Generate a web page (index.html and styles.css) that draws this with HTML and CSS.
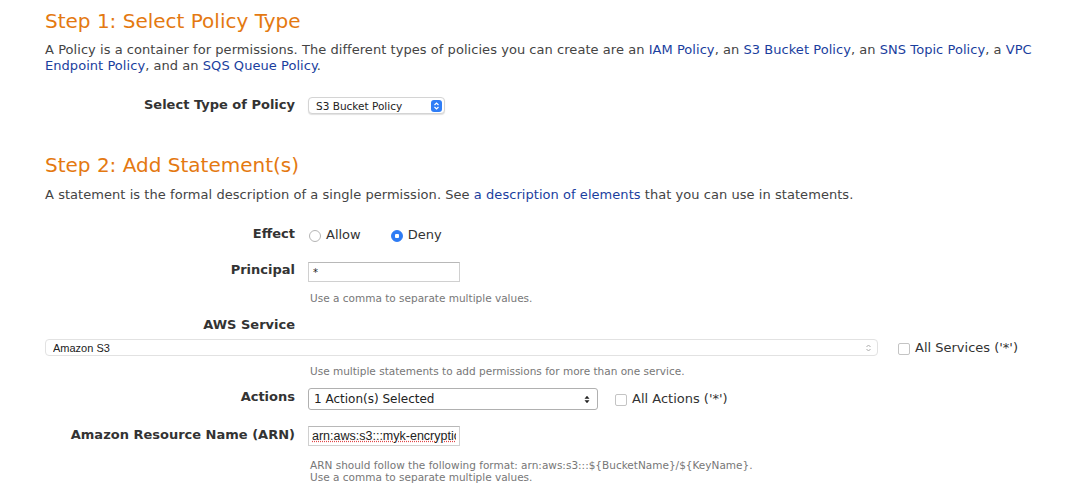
FILE: index.html
```html
<!DOCTYPE html>
<html>
<head>
<meta charset="utf-8">
<link rel="stylesheet" href="styles.css">
</head>
<body>
<div class="page">
  <h1 class="step step-1">Step 1: Select Policy Type</h1>
  <p class="intro">A Policy is a container for permissions. The different types of policies you can create are an <a href="#">IAM Policy</a>, an <a href="#">S3 Bucket Policy</a>, an <a href="#">SNS Topic Policy</a>, a <a href="#">VPC</a> <a href="#">Endpoint Policy</a>, and an <a href="#">SQS Queue Policy</a>.</p>

  <div class="row type-row">
    <label class="label">Select Type of Policy</label>
    <div class="control">
      <select class="sel sel-type"><option>S3 Bucket Policy</option></select>
    </div>
  </div>

  <h1 class="step step-2">Step 2: Add Statement(s)</h1>
  <p class="intro intro-2">A statement is the formal description of a single permission. See <a href="#">a description of elements</a> that you can use in statements.</p>

  <div class="row effect-row">
    <label class="label">Effect</label>
    <div class="control radios">
      <span class="radio-opt"><span class="radio"></span>Allow</span>
      <span class="radio-opt"><span class="radio checked"></span>Deny</span>
    </div>
  </div>

  <div class="row principal-row">
    <label class="label">Principal</label>
    <div class="control">
      <input class="text-in principal-in" type="text" value="*">
      <div class="hint">Use a comma to separate multiple values.</div>
    </div>
  </div>

  <div class="row service-label-row">
    <label class="label">AWS Service</label>
  </div>
  <div class="service-line">
    <select class="sel sel-service"><option>Amazon S3</option></select>
    <span class="check-opt"><span class="check"></span>All Services ('*')</span>
  </div>
  <div class="row hint-row">
    <span class="label"></span>
    <div class="control"><div class="hint">Use multiple statements to add permissions for more than one service.</div></div>
  </div>

  <div class="row actions-row">
    <label class="label">Actions</label>
    <div class="control inline">
      <select class="sel sel-actions"><option>1 Action(s) Selected</option></select>
      <span class="check-opt"><span class="check"></span>All Actions ('*')</span>
    </div>
  </div>

  <div class="row arn-row">
    <label class="label">Amazon Resource Name (ARN)</label>
    <div class="control">
      <input class="text-in arn-in" type="text" value="arn:aws:s3:::myk-encryption-bucket/*">
      <div class="hint arn-hint">ARN should follow the following format: arn:aws:s3:::${BucketName}/${KeyName}.<br>Use a comma to separate multiple values.</div>
    </div>
  </div>
</div>
</body>
</html>
```

FILE: styles.css
```css
html, body {
  margin: 0;
  padding: 0;
  background: #fff;
}

.page {
  width: 998px;
  padding: 9px 0 0 45px;
  font-family: "DejaVu Sans", Verdana, sans-serif;
  color: #444;
  font-size: 13px;
}

a {
  color: #1a3e9e;
  text-decoration: none;
}

.step {
  margin: 0;
  font-size: 20px;
  line-height: 24px;
  font-weight: normal;
  color: #e47911;
}

.intro {
  margin: 9px 0 0 0;
  line-height: 16px;
  letter-spacing: 0.05px;
}

.step-2 {
  margin-top: 39px;
}

.intro-2 {
  margin-top: 10px;
}

.row {
  display: flex;
  align-items: flex-start;
}

.label {
  flex: 0 0 250px;
  text-align: right;
  font-weight: bold;
  color: #333;
  font-size: 13px;
  line-height: 18px;
}

.control {
  margin-left: 13px;
  display: flex;
  flex-direction: column;
  align-items: flex-start;
}

.control.inline {
  flex-direction: row;
  align-items: center;
}

.type-row {
  margin-top: 22px;
}

.sel {
  -webkit-appearance: none;
  appearance: none;
  margin: 0;
  background-repeat: no-repeat;
  outline: none;
}

.sel-type {
  width: 137px;
  height: 17px;
  margin-top: 1px;
  border: 1px solid #d4d4d4;
  border-radius: 4px;
  box-shadow: 0 1px 1px rgba(0,0,0,0.12);
  background-color: #fff;
  font-family: "DejaVu Sans", Verdana, sans-serif;
  font-size: 10.5px;
  color: #222;
  padding: 0 0 0 7px;
  background-image: url("data:image/svg+xml;utf8,<svg xmlns='http://www.w3.org/2000/svg' width='11' height='12'><rect width='11' height='12' rx='3' fill='%232f7df6'/><path d='M3.5 5 L5.5 3 L7.5 5 M3.5 7 L5.5 9 L7.5 7' fill='none' stroke='white' stroke-width='1.2'/></svg>");
  background-position: right 2px center;
}

.effect-row {
  margin-top: 22px;
}

.radios {
  flex-direction: row;
  align-items: center;
  margin-left: 14px;
  padding-top: 2px;
}

.radio-opt {
  display: inline-flex;
  align-items: center;
  color: #333;
  font-size: 13px;
  line-height: 16px;
  margin-right: 30px;
}

.radio {
  width: 10px;
  height: 10px;
  border: 1px solid #b5b5b5;
  border-radius: 50%;
  background: #fff;
  margin-right: 5px;
  margin-top: 2px;
  box-sizing: content-box;
  display: inline-block;
}

.radio.checked {
  border-color: #2d7bf4;
  background: radial-gradient(circle, #fff 0 2px, #2d7bf4 2.5px);
}

.principal-row {
  margin-top: 18px;
}

.text-in {
  margin: 0;
  width: 152px;
  height: 20px;
  box-sizing: border-box;
  border: 1px solid #d0d0d0;
  border-top-color: #b8b8b8;
  padding: 0 4px;
  font-family: "DejaVu Sans", Verdana, sans-serif;
  font-size: 10px;
  color: #222;
  outline: none;
}

.principal-in {
  margin-top: 1px;
}

.hint {
  font-size: 10.5px;
  color: #777;
  line-height: 12px;
  margin-top: 11px;
  margin-left: 2px;
}

.principal-row .hint {
  margin-top: 10px;
}

.service-label-row {
  margin-top: 12px;
}

.service-line {
  display: flex;
  align-items: center;
  margin-top: 5px;
}

.sel-service {
  width: 833px;
  height: 17px;
  border: 1px solid #e2e2e2;
  border-radius: 4px;
  background-color: #fff;
  font-family: "Liberation Sans", Arial, sans-serif;
  font-size: 11px;
  color: #222;
  padding: 0 0 0 7px;
  background-image: url("data:image/svg+xml;utf8,<svg xmlns='http://www.w3.org/2000/svg' width='7' height='10'><path d='M1.5 4 L3.5 2 L5.5 4 M1.5 6 L3.5 8 L5.5 6' fill='none' stroke='%23aaa' stroke-width='1'/></svg>");
  background-position: right 5px center;
}

.check-opt {
  display: inline-flex;
  align-items: center;
  color: #333;
  font-size: 13px;
  line-height: 16px;
  margin-left: 20px;
}

.check {
  width: 10px;
  height: 10px;
  border: 1px solid #c4c4c4;
  border-radius: 2px;
  background: #fff;
  margin-right: 5px;
  margin-top: 2px;
  display: inline-block;
}

.hint-row .hint {
  margin-top: 9px;
}

.actions-row {
  margin-top: 11px;
}

.sel-actions {
  width: 290px;
  height: 22px;
  border: 1px solid #b0b0b0;
  border-radius: 3px;
  background-color: #fff;
  font-family: "DejaVu Sans", Verdana, sans-serif;
  font-size: 12px;
  color: #222;
  padding: 0 0 0 5px;
  background-image: url("data:image/svg+xml;utf8,<svg xmlns='http://www.w3.org/2000/svg' width='6' height='9'><path d='M0.5 3.8 L3 0.8 L5.5 3.8 Z M0.5 5.2 L3 8.2 L5.5 5.2 Z' fill='%23222'/></svg>");
  background-position: right 7px center;
}

.actions-row .check-opt {
  margin-left: 17px;
}

.arn-row {
  margin-top: 16px;
}

.arn-in {
  font-family: "Liberation Sans", Arial, sans-serif;
  font-size: 12.5px;
  padding: 0 3px;
  text-decoration: underline dotted #e04848;
}

.arn-hint {
  margin-top: 13px;
}
```
